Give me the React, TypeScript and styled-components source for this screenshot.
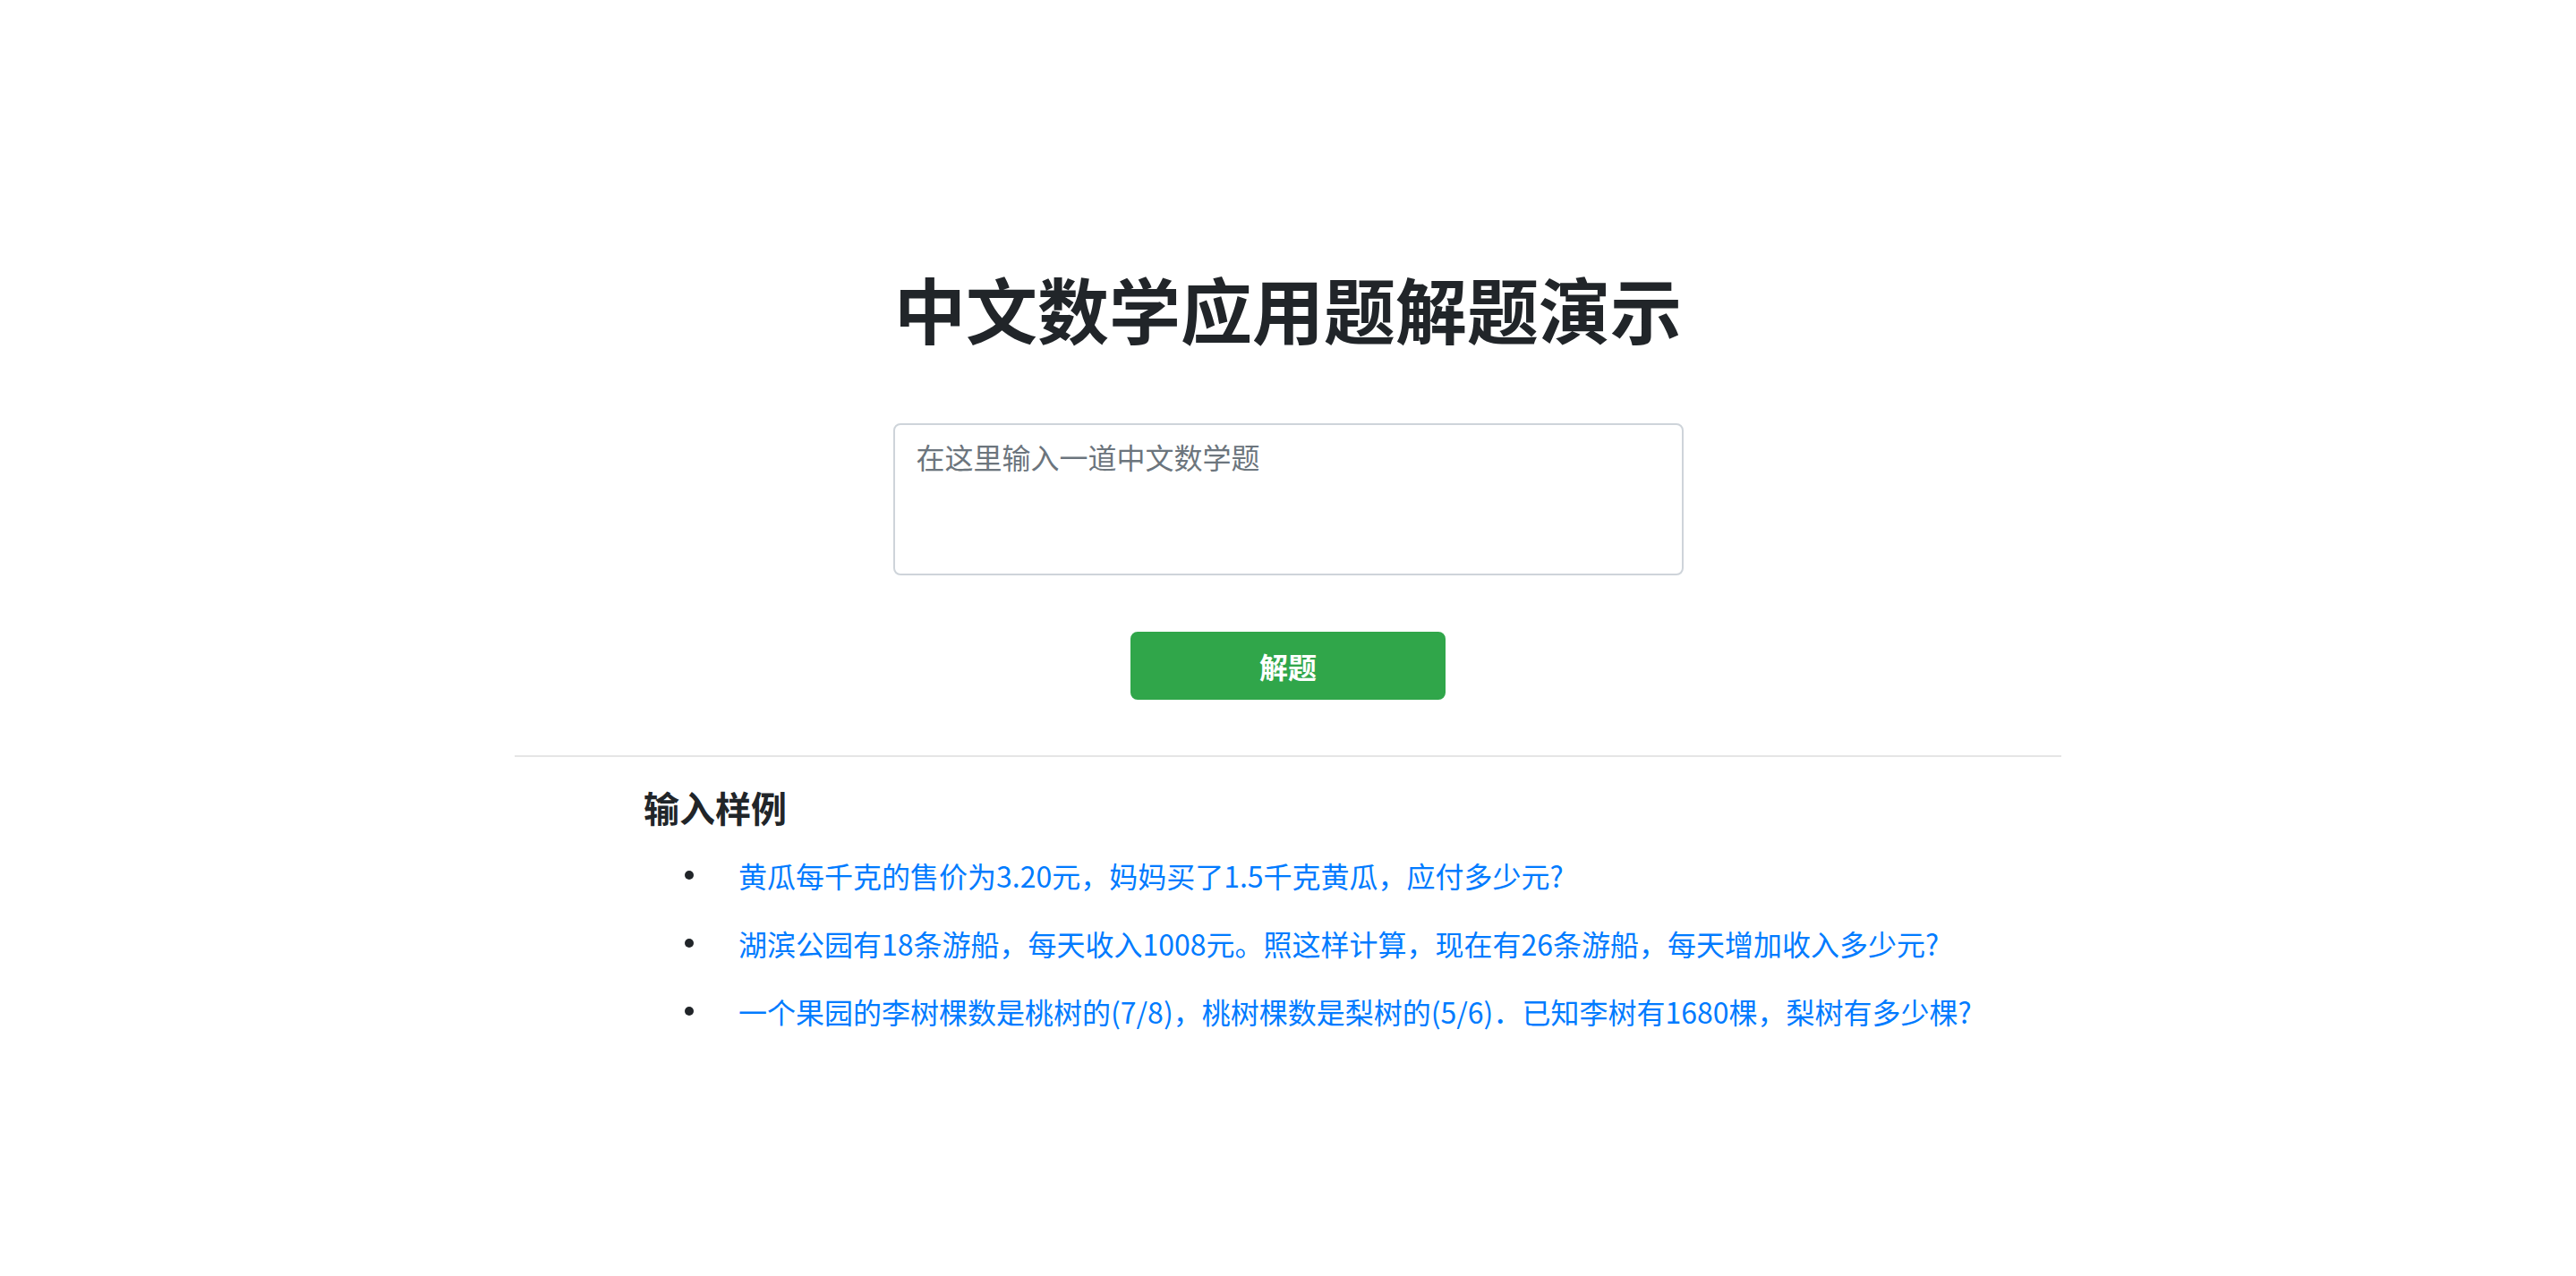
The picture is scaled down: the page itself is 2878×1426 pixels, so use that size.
import React, { useState } from 'react';
import styled, { createGlobalStyle } from 'styled-components';

const GlobalStyle = createGlobalStyle`
    html, body {
        margin: 0;
        padding: 0;
        background: #fff;
    }
    body {
        font-family: "Noto Sans CJK SC", "Noto Sans", sans-serif;
        color: #212529;
    }
    * {
        box-sizing: border-box;
    }
`;

const Page = styled.div`
    display: flex;
    flex-direction: column;
    align-items: center;
    padding-top: 295px;
    padding-bottom: 120px;
`;

const Title = styled.h1`
    margin: 0;
    font-size: 80px;
    line-height: 1.2;
    font-weight: 700;
    color: #212529;
`;

const QuestionInput = styled.textarea`
    display: block;
    margin-top: 82px;
    width: 883px;
    height: 170px;
    padding: 11px 24px;
    font-family: inherit;
    font-size: 32px;
    line-height: 1.5;
    color: #495057;
    border: 2px solid #ced4da;
    border-radius: 8px;
    resize: none;
    outline: none;

    &::placeholder {
        color: #6c757d;
    }
`;

const SolveButton = styled.button`
    margin-top: 63px;
    width: 352px;
    height: 76px;
    padding: 12px 24px;
    font-family: inherit;
    font-size: 32px;
    font-weight: 700;
    line-height: 1.5;
    color: #fff;
    background-color: #30a64a;
    border: 2px solid #30a64a;
    border-radius: 8px;
    cursor: pointer;
`;

const Divider = styled.hr`
    width: 1728px;
    margin: 62px 0 32px;
    border: 0;
    border-top: 2px solid #e5e5e5;
`;

const Examples = styled.section`
    width: 1728px;
    padding-left: 144px;
`;

const ExamplesTitle = styled.h5`
    margin: 0 0 28px;
    font-size: 40px;
    line-height: 1.2;
    font-weight: 700;
    color: #212529;
`;

const ExampleList = styled.ul`
    display: flex;
    flex-direction: column;
    gap: 28px;
    margin: 0;
    padding: 0;
    list-style: none;
`;

const ExampleItem = styled.li`
    display: flex;
    align-items: center;
    padding-left: 46px;
    font-size: 32px;
    line-height: 1.5;
`;

const Bullet = styled.span`
    flex: none;
    width: 10px;
    height: 10px;
    margin-right: 50px;
    border-radius: 50%;
    background: #212529;
`;

const ExampleLink = styled.a`
    color: #007bff;
    text-decoration: none;
    cursor: pointer;
`;

const examples = [
    '黄瓜每千克的售价为3.20元，妈妈买了1.5千克黄瓜，应付多少元?',
    '湖滨公园有18条游船，每天收入1008元。照这样计算，现在有26条游船，每天增加收入多少元?',
    '一个果园的李树棵数是桃树的(7/8)，桃树棵数是梨树的(5/6)．已知李树有1680棵，梨树有多少棵?'
];

const App: React.FC = () => {
    const [question, setQuestion] = useState('');

    return (
        <>
            <GlobalStyle />
            <Page>
                <Title>中文数学应用题解题演示</Title>
                <QuestionInput
                    placeholder="在这里输入一道中文数学题"
                    value={question}
                    onChange={e => setQuestion(e.target.value)}
                />
                <SolveButton>解题</SolveButton>
                <Divider />
                <Examples>
                    <ExamplesTitle>输入样例</ExamplesTitle>
                    <ExampleList>
                        {examples.map((text, index) => (
                            <ExampleItem key={index}>
                                <Bullet />
                                <ExampleLink onClick={() => setQuestion(text)}>{text}</ExampleLink>
                            </ExampleItem>
                        ))}
                    </ExampleList>
                </Examples>
            </Page>
        </>
    );
};

export default App;
